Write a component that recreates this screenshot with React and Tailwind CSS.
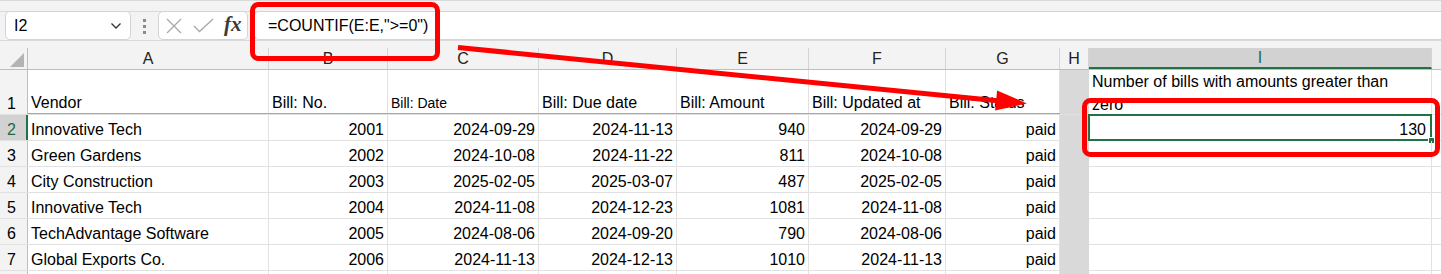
import React from "react";

const cols = [
  { key: "A", w: 241 },
  { key: "B", w: 119 },
  { key: "C", w: 151 },
  { key: "D", w: 138 },
  { key: "E", w: 132 },
  { key: "F", w: 137 },
  { key: "G", w: 114 },
  { key: "H", w: 29 },
  { key: "I", w: 343 },
  { key: "J", w: 60 },
];

const rows = [
  [2, "Innovative Tech", "2001", "2024-09-29", "2024-11-13", "940", "2024-09-29", "paid"],
  [3, "Green Gardens", "2002", "2024-10-08", "2024-11-22", "811", "2024-10-08", "paid"],
  [4, "City Construction", "2003", "2025-02-05", "2025-03-07", "487", "2025-02-05", "paid"],
  [5, "Innovative Tech", "2004", "2024-11-08", "2024-12-23", "1081", "2024-11-08", "paid"],
  [6, "TechAdvantage Software", "2005", "2024-08-06", "2024-09-20", "790", "2024-08-06", "paid"],
  [7, "Global Exports Co.", "2006", "2024-11-13", "2024-12-13", "1010", "2024-11-13", "paid"],
];

function Cell({ w, className = "", children }) {
  return (
    <div
      className={"shrink-0 h-full flex border-r border-[#e1e1e1] px-[3px] pb-px " + className}
      style={{ width: w }}
    >
      {children}
    </div>
  );
}

export default function App() {
  return (
    <div className="relative w-[1441px] h-[274px] overflow-hidden bg-white font-['Liberation_Sans',Arial,sans-serif] text-[16px] leading-[18px] text-black">
      {/* top strip */}
      <div className="h-[12px] bg-[#f3f3f3] border-t border-b border-[#d9d9d9]" />
      {/* formula bar */}
      <div className="flex h-[29px] bg-[#f3f3f3] border-b border-[#d9d9d9]">
        <div className="ml-[5px] mt-[-1px] w-[126px] h-[29px] bg-white border border-[#d4d4d4] rounded-[5px] flex items-center pl-[8px] pr-[6px]">
          <span className="flex-1">I2</span>
          <svg width="12" height="8" viewBox="0 0 12 8" className="mr-[2px]">
            <path d="M1.5 1.5 L6 6 L10.5 1.5" fill="none" stroke="#333" strokeWidth="1.3" />
          </svg>
        </div>
        <div className="w-[27px] flex flex-col items-center justify-center gap-[3px]">
          <div className="w-[3px] h-[3px] bg-[#8a8a8a]" />
          <div className="w-[3px] h-[3px] bg-[#8a8a8a]" />
          <div className="w-[3px] h-[3px] bg-[#8a8a8a]" />
        </div>
        <div className="mt-[-1px] w-[90px] h-[29px] bg-white border border-[#d4d4d4] rounded-[5px] flex items-center pl-[7px]">
          <svg width="16" height="16" viewBox="0 0 16 16" className="mr-[11px]">
            <path d="M1 1 L15 15 M15 1 L1 15" stroke="#a8a8a8" strokeWidth="1.3" fill="none" />
          </svg>
          <svg width="21" height="15" viewBox="0 0 21 15" className="mr-[10px]">
            <path d="M1 8 L6.5 13.5 L20 1" stroke="#a8a8a8" strokeWidth="1.3" fill="none" />
          </svg>
          <span className="font-['Liberation_Serif',serif] italic font-bold text-[21px] leading-none text-[#3a3a3a] mt-[-2px]">fx</span>
        </div>
        <div className="ml-[6px] mt-[-1px] flex-1 h-[29px] bg-white border border-r-0 border-[#d4d4d4] rounded-l-[5px] flex items-center pl-[13px]">
          =COUNTIF(E:E,"&gt;=0")
        </div>
      </div>
      <div className="h-[7px] bg-[#f3f3f3]" />

      {/* column headers */}
      <div className="flex h-[22px] bg-[#f3f3f3] border-b border-[#bdbdbd]">
        <div className="w-[28px] shrink-0 h-full border-r border-[#bdbdbd] flex items-end justify-end pr-[3px] pb-[2px]">
          <svg width="14" height="14" viewBox="0 0 14 14">
            <path d="M14 0 L14 14 L0 14 Z" fill="#b4b4b4" />
          </svg>
        </div>
        {cols.map((c) => (
          <div
            key={c.key}
            className={
              "shrink-0 h-full flex items-center justify-center border-r border-[#d4d4d4] " +
              (c.key === "I" ? "bg-[#d2d2d2] text-[#1e6b41] border-b-2 border-b-[#217346]" : "text-[#222]")
            }
            style={{ width: c.w }}
          >
            {c.key === "J" ? "" : c.key}
          </div>
        ))}
      </div>

      {/* row 1 */}
      <div className="flex h-[45px] border-b border-[#e1e1e1]">
        <div className="w-[28px] shrink-0 h-full bg-[#f3f3f3] border-r border-[#bdbdbd] flex items-end pl-[7px] pb-px">1</div>
        <div className="flex h-full border-b border-[#a6a6a6] mb-[-1px]">
          <Cell w={241} className="items-end">Vendor</Cell>
          <Cell w={119} className="items-end">Bill: No.</Cell>
          <Cell w={151} className="items-end text-[14px] leading-[18px] pb-[2px]">Bill: Date</Cell>
          <Cell w={138} className="items-end">Bill: Due date</Cell>
          <Cell w={132} className="items-end">Bill: Amount</Cell>
          <Cell w={137} className="items-end">Bill: Updated at</Cell>
          <Cell w={114} className="items-end">Bill: Status</Cell>
        </div>
        <div className="w-[29px] shrink-0 h-full bg-[#d9d9d9] mb-[-1px]" />
        <Cell w={343} className="items-end leading-[23px] pb-0">
          <span className="block mb-[-3px]">
            Number of bills with amounts greater than
            <br />
            zero
          </span>
        </Cell>
        <Cell w={60} />
      </div>

      {/* data rows */}
      {rows.map((r) => {
        const sel = r[0] === 2;
        return (
          <div key={r[0]} className="flex h-[26px] border-b border-[#e1e1e1]">
            <div
              className={
                "w-[28px] shrink-0 h-full border-r flex items-end pl-[7px] pb-px " +
                (sel ? "bg-[#d2d2d2] border-r-2 border-r-[#217346] text-[#1e6b41]" : "bg-[#f3f3f3] border-[#bdbdbd]")
              }
            >
              {r[0]}
            </div>
            <Cell w={241} className="items-end">{r[1]}</Cell>
            <Cell w={119} className="items-end justify-end">{r[2]}</Cell>
            <Cell w={151} className="items-end justify-end">{r[3]}</Cell>
            <Cell w={138} className="items-end justify-end">{r[4]}</Cell>
            <Cell w={132} className="items-end justify-end">{r[5]}</Cell>
            <Cell w={137} className="items-end justify-end">{r[6]}</Cell>
            <Cell w={114} className="items-end justify-end">{r[7]}</Cell>
            <div className="w-[29px] shrink-0 h-[27px] bg-[#d9d9d9]" />
            <Cell w={343} className="relative items-end justify-end pr-[5px]">
              {sel && (
                <>
                  <span>130</span>
                  <div className="absolute left-[-1px] top-[-1px] right-[-1px] bottom-[-1px] border-2 border-[#217346]" />
                  <div className="absolute right-[-4px] bottom-[-4px] w-[7px] h-[7px] bg-[#217346] border border-white" />
                </>
              )}
            </Cell>
            <Cell w={60} />
          </div>
        );
      })}
      <div className="flex h-[26px]">
        <div className="w-[28px] shrink-0 h-full bg-[#f3f3f3] border-r border-[#bdbdbd]" />
        <Cell w={241} />
        <Cell w={119} />
        <Cell w={151} />
        <Cell w={138} />
        <Cell w={132} />
        <Cell w={137} />
        <Cell w={114} />
        <div className="w-[29px] shrink-0 h-full bg-[#d9d9d9]" />
        <Cell w={343} />
        <Cell w={60} />
      </div>

      {/* annotations */}
      <svg className="absolute left-0 top-0 pointer-events-none" width="1441" height="274" viewBox="0 0 1441 274">
        <rect x="252.5" y="4.5" width="185" height="54" rx="6" fill="none" stroke="#ff0000" strokeWidth="5" />
        <rect x="1084.5" y="100.5" width="353" height="54" rx="6" fill="none" stroke="#ff0000" strokeWidth="5" />
        <line x1="458" y1="47.5" x2="1000" y2="100.9" stroke="#ff0000" strokeWidth="5" />
        <polygon points="1027,103.4 997.1,90.6 995.1,110.5" fill="#ff0000" />
      </svg>
    </div>
  );
}
